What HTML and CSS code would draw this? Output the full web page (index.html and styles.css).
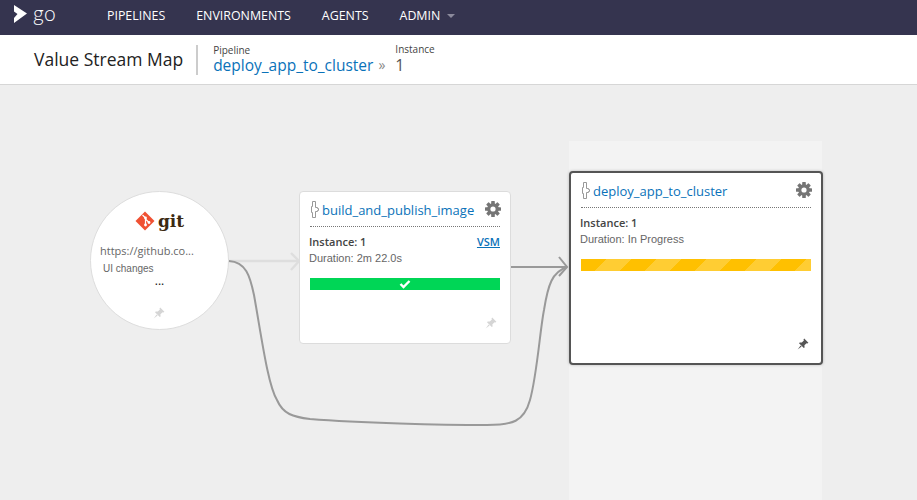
FILE: index.html
```html
<!DOCTYPE html>
<html>
<head>
<title>Value Stream Map</title>
<link rel="stylesheet" href="styles.css">
</head>
<body>

<svg width="0" height="0" class="defs">
  <defs>
    <symbol id="gear" viewBox="0 0 16 16">
      <rect x="6.2" y="0" width="3.6" height="16" rx="0.6"/>
      <rect x="6.2" y="0" width="3.6" height="16" rx="0.6" transform="rotate(45 8 8)"/>
      <rect x="6.2" y="0" width="3.6" height="16" rx="0.6" transform="rotate(90 8 8)"/>
      <rect x="6.2" y="0" width="3.6" height="16" rx="0.6" transform="rotate(135 8 8)"/>
      <circle cx="8" cy="8" r="5.8"/>
      <circle cx="8" cy="8" r="2.6" fill="#fff"/>
    </symbol>
    <symbol id="pin" viewBox="0 0 12 12">
      <path d="M7.2 0.6 L11.4 4.8 L10.4 5.6 L9.6 5.2 L7.4 7.2 L7.6 9.4 L6.8 10 L2 5.2 L2.7 4.5 L4.8 4.6 L6.9 2.5 L6.5 1.5 Z"/>
      <path d="M3.6 7.4 L4.6 8.4 L0.6 11.4 Z"/>
    </symbol>
    <symbol id="stage" viewBox="0 0 8 17">
      <path d="M1.5 0.5 H4.5 V6.5 H6.5 V7.5 H7.5 V9.5 H6.5 V10.5 H4.5 V16.5 H1.5 V11.5 H0.5 V5.5 H1.5 Z" fill="none" stroke="#999" stroke-width="1"/>
    </symbol>
  </defs>
</svg>

<div class="topnav">
  <a class="logo" href="#">
    <svg width="13" height="18" viewBox="0 0 13 18"><path d="M0 0 L13 8.5 L0 18 L0 13 L3.5 9 L0 6.5 Z" fill="#fff"/></svg>
    <span class="logo-text">go</span>
  </a>
  <a class="navlink nav-first" href="#">PIPELINES</a>
  <a class="navlink" href="#">ENVIRONMENTS</a>
  <a class="navlink" href="#">AGENTS</a>
  <a class="navlink" href="#">ADMIN <span class="caret"></span></a>
</div>

<div class="subheader">
  <h1 class="page-title">Value Stream Map</h1>
  <div class="crumb crumb-pipeline">
    <span class="crumb-label">Pipeline</span>
    <a class="crumb-link" href="#">deploy_app_to_cluster</a>
  </div>
  <span class="crumb-sep">&raquo;</span>
  <div class="crumb">
    <span class="crumb-label">Instance</span>
    <span class="crumb-value">1</span>
  </div>
</div>

<div class="vsm">
  <div class="current-col"></div>

  <svg class="edges" width="917" height="415" viewBox="0 85 917 415">
    <path d="M229 261 H298" class="edge-light"/>
    <path d="M291 253 L299 261 L291 270" class="edge-light"/>
    <path d="M511 267 H567" class="edge-dark"/>
    <path d="M229 261 C246 262 250 276 254 295 C262 340 268 385 277 400 C283 414 293 417 310 419 C360 423 440 425 487 425 C512 425 524 422 530 400 C537 375 540 330 544 310 C548 285 552 272 567 267" class="edge-dark"/>
    <path d="M559 257 L567 267 L559 276" class="edge-dark"/>
  </svg>

  <div class="material">
    <div class="git-logo">
      <svg width="20" height="20" viewBox="0 0 20 20">
        <path d="M10 0.5 L19.5 10 L10 19.5 L0.5 10 Z" fill="#f05133"/>
        <path d="M7.5 4 L10.5 7 M10.5 7 V14 M10.5 8 L14 11.5" stroke="#fff" stroke-width="1.2" fill="none"/>
        <circle cx="10.5" cy="7" r="1.4" fill="#fff"/>
        <circle cx="10.5" cy="14" r="1.4" fill="#fff"/>
        <circle cx="14" cy="11.5" r="1.4" fill="#fff"/>
      </svg>
      <span class="git-text">git</span>
    </div>
    <div class="material-url">https://github.co...</div>
    <div class="material-commit">UI changes</div>
    <div class="material-more">...</div>
    <svg class="pin pin-material"><use href="#pin"/></svg>
  </div>

  <div class="card card-build">
    <div class="card-head">
      <svg class="stage-icon"><use href="#stage"/></svg>
      <a class="card-name" href="#">build_and_publish_image</a>
      <svg class="gear"><use href="#gear"/></svg>
    </div>
    <div class="card-info">
      <div>
        <div class="instance">Instance: 1</div>
        <div class="duration">Duration: 2m 22.0s</div>
      </div>
      <a class="vsm-link" href="#">VSM</a>
    </div>
    <div class="bar bar-passed">
      <svg width="12" height="10" viewBox="0 0 12 10"><path d="M1.5 5 L4.5 8 L10.5 2" fill="none" stroke="#fff" stroke-width="2.4"/></svg>
    </div>
    <svg class="pin pin-card"><use href="#pin"/></svg>
  </div>

  <div class="card card-current">
    <div class="card-head">
      <svg class="stage-icon"><use href="#stage"/></svg>
      <a class="card-name" href="#">deploy_app_to_cluster</a>
      <svg class="gear"><use href="#gear"/></svg>
    </div>
    <div class="card-info">
      <div>
        <div class="instance">Instance: 1</div>
        <div class="duration">Duration: In Progress</div>
      </div>
    </div>
    <div class="bar bar-building"></div>
    <svg class="pin pin-card pin-dark"><use href="#pin"/></svg>
  </div>
</div>

</body>
</html>
```

FILE: styles.css
```css
html, body {
    margin: 0;
    padding: 0;
    height: 500px;
    overflow: hidden;
}

body {
    display: flex;
    flex-direction: column;
    font-family: "Open Sans", sans-serif;
    background-color: #eeeeee;
}

a {
    text-decoration: none;
}

.defs {
    position: absolute;
}

/* top bar */
.topnav {
    display: flex;
    align-items: center;
    flex: 0 0 35px;
    background-color: #35344f;
    padding-left: 14px;
}

.logo {
    display: flex;
    align-items: flex-start;
    width: 93px;
    height: 35px;
}

.logo svg {
    margin-top: 5px;
}

.logo-text {
    color: #fff;
    font-family: "Lato", sans-serif;
    font-weight: 300;
    font-size: 21px;
    letter-spacing: .5px;
    margin-left: 6px;
}

.navlink {
    color: #fff;
    font-size: 12.4px;
    margin-right: 31px;
    margin-bottom: 5px;
}

.caret {
    display: inline-block;
    width: 0;
    height: 0;
    margin-left: 3px;
    margin-bottom: 2px;
    border-left: 4px solid transparent;
    border-right: 4px solid transparent;
    border-top: 4px solid #8b8a9c;
}

/* page header */
.subheader {
    display: flex;
    align-items: center;
    flex: 0 0 50px;
    box-sizing: border-box;
    background-color: #fff;
    border-bottom: 1px solid #d6d6d6;
    padding-left: 34px;
}

.page-title {
    margin: 0;
    padding: 0 13px 2px 0;
    border-right: 2px solid #cccccc;
    font-size: 17.5px;
    line-height: 28px;
    font-weight: 400;
    color: #222;
}

.crumb {
    display: flex;
    flex-direction: column;
}

.crumb-pipeline {
    margin-left: 15px;
    padding-top: 2px;
}

.crumb-label {
    font-size: 10px;
    line-height: 11px;
    color: #444;
}

.crumb-link {
    font-size: 15.5px;
    line-height: 18px;
    color: #0a72b9;
    padding-bottom: 2px;
}

.crumb-sep {
    margin: 10px 10px 0 5px;
    font-size: 14px;
    color: #888;
}

.crumb-value {
    font-size: 16px;
    line-height: 20px;
    color: #555;
}

/* the map */
.vsm {
    position: relative;
    flex: 1;
    background-color: #eeeeee;
}

.current-col {
    position: absolute;
    left: 569px;
    top: 56px;
    bottom: 0;
    width: 253px;
    background-color: #f3f3f3;
}

.edges {
    position: absolute;
    left: 0;
    top: 0;
    fill: none;
}

.edge-light {
    fill: none;
    stroke: #dedede;
    stroke-width: 2.4;
}

.edge-dark {
    fill: none;
    stroke: #999999;
    stroke-width: 2;
}

.material {
    position: absolute;
    left: 90px;
    top: 106px;
    width: 139px;
    height: 139px;
    box-sizing: border-box;
    border: 1px solid #dddddd;
    border-radius: 50%;
    background-color: #fff;
}

.git-logo {
    display: flex;
    align-items: center;
    justify-content: center;
    height: 22px;
    margin-top: 18px;
}

.git-text {
    font-family: "DejaVu Serif", serif;
    font-weight: 700;
    font-size: 17px;
    line-height: 20px;
    color: #3c2a12;
    margin-left: 3px;
}

.material-url {
    margin: 11px 0 0 9px;
    font-size: 11px;
    line-height: 15px;
    color: #666;
}

.material-commit {
    margin: 5px 0 0 12px;
    font-family: "Liberation Sans", sans-serif;
    font-size: 10px;
    line-height: 12px;
    color: #666;
}

.material-more {
    margin-top: 0;
    text-align: center;
    font-size: 12px;
    line-height: 12px;
    color: #111;
}

.pin {
    position: absolute;
    width: 12px;
    height: 12px;
    fill: #d5d5d5;
}

.pin-material {
    left: 62px;
    bottom: 10px;
}

.pin-card {
    right: 13px;
    bottom: 14px;
}

.pin-dark {
    fill: #555555;
    right: 12px;
    bottom: 13px;
}

.card {
    position: absolute;
    box-sizing: border-box;
    background-color: #fff;
    border-radius: 4px;
    padding: 0 10px;
}

.card-build {
    left: 299px;
    top: 106px;
    width: 212px;
    height: 153px;
    border: 1px solid #dcdcdc;
}

.card-current {
    left: 569px;
    top: 86px;
    width: 254px;
    height: 194px;
    border: 2px solid #555555;
    box-shadow: 0 0 3px rgba(0, 0, 0, .25);
}

.card-head {
    display: flex;
    align-items: center;
    height: 33px;
    padding-top: 1px;
    border-bottom: 1px dotted #777;
}

.stage-icon {
    width: 8px;
    height: 17px;
    margin: 0 3px 0 1px;
}

.card-name {
    flex: 1;
    font-size: 13px;
    color: #0a72b9;
}

.gear {
    width: 16px;
    height: 16px;
    fill: #757575;
    margin: -2px -1px 0 0;
}

.card-info {
    display: flex;
    justify-content: space-between;
    margin: 7px 0 0 -1px;
}

.instance {
    font-size: 11px;
    line-height: 16px;
    font-weight: 600;
    color: #444;
}

.duration {
    font-family: "Liberation Sans", sans-serif;
    font-size: 11px;
    line-height: 16px;
    color: #666;
}

.vsm-link {
    font-size: 11px;
    line-height: 16px;
    font-weight: 600;
    color: #0a72b9;
    text-decoration: underline;
}

.bar {
    display: flex;
    align-items: center;
    justify-content: center;
    height: 12px;
    margin-top: 12px;
}

.bar-passed {
    background-color: #00d656;
}

.bar-building {
    background-color: #ffc000;
    background-image: repeating-linear-gradient(135deg, #ffc000 0, #ffc000 17.7px, #ffcd33 17.7px, #ffcd33 35.4px);
}
```
